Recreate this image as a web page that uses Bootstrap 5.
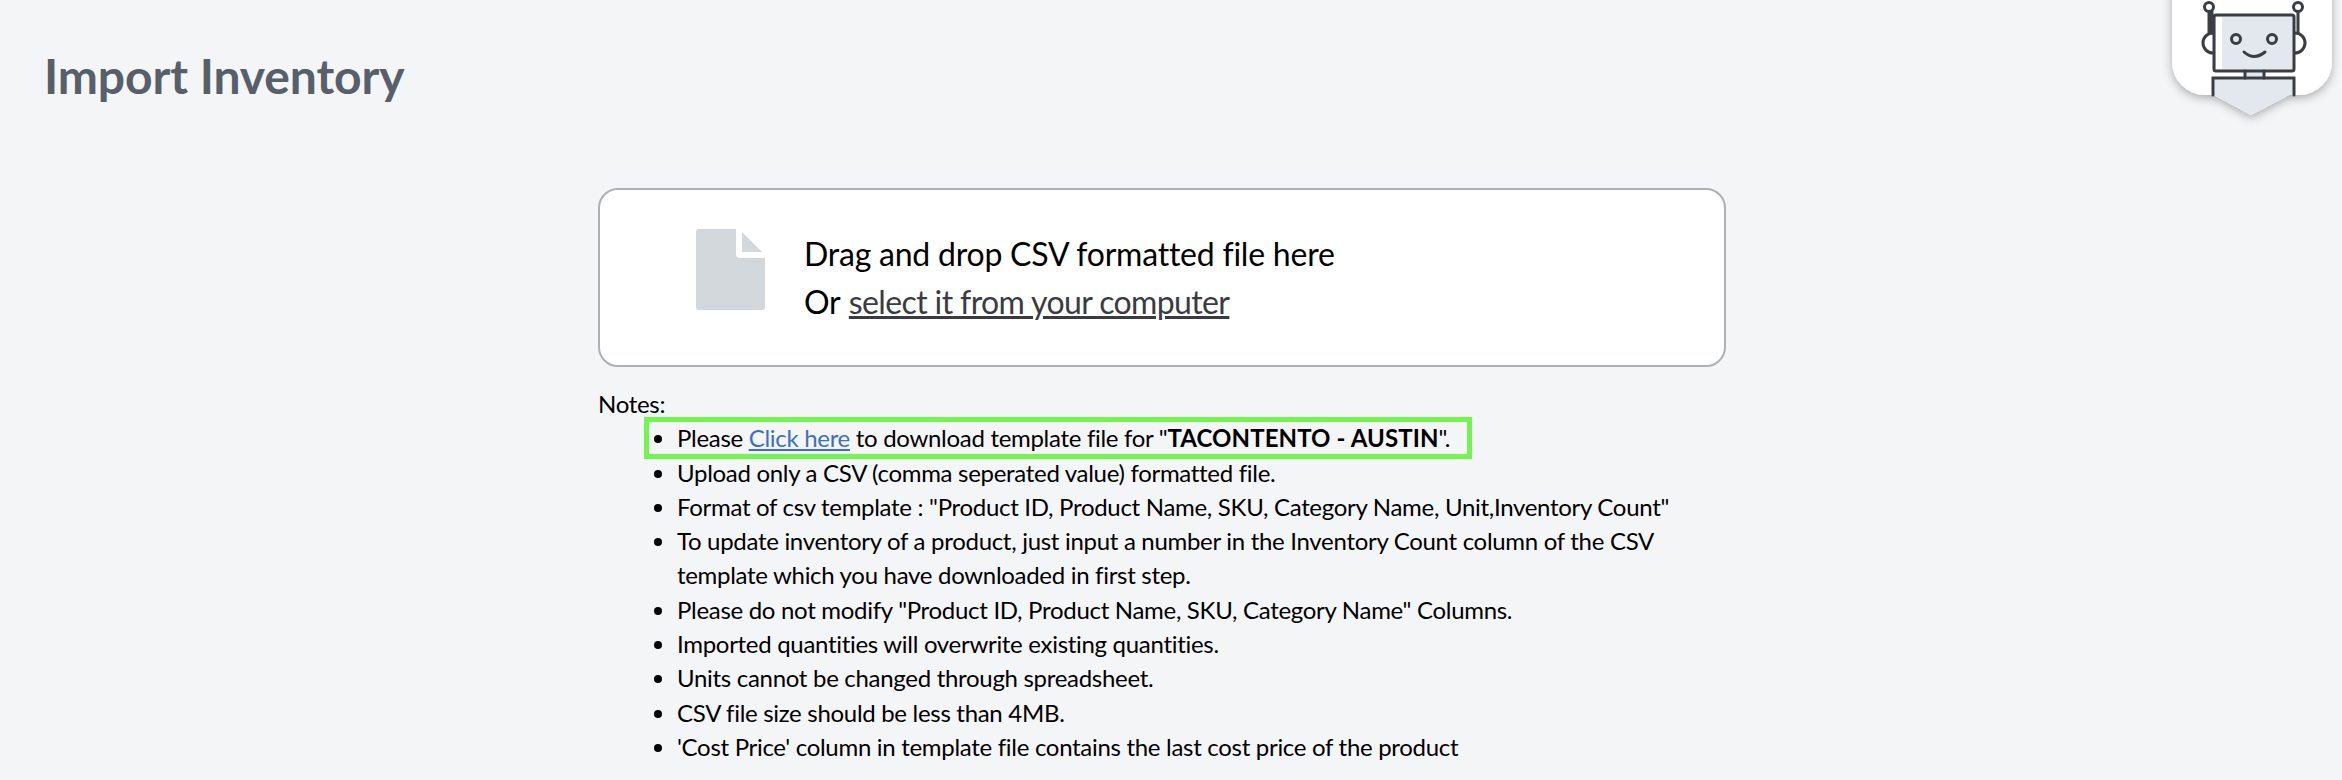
<!DOCTYPE html>
<html lang="en">
<head>
    <meta charset="UTF-8">
    <title>Import Inventory</title>
    <link href="https://cdn.jsdelivr.net/npm/bootstrap@5.3.0/dist/css/bootstrap.min.css" rel="stylesheet">
    <style>
        body { background: #f4f5f7; font-family: "Lato", "Liberation Sans", sans-serif; color: #000; overflow: hidden; }
        .page-head { padding: 44px 44px 0; height: 188px; }
        .page-title { font-size: 48px; font-weight: 700; line-height: 64px; color: #575f6b; margin: 0; letter-spacing: -0.1px; }
        .import-wrap { width: 1128px; margin-left: 598px; }
        .drop-box { height: 179px; background: #fff; border: 2px solid #adb0b5; border-radius: 20px; padding-left: 96px; gap: 39px; }
        .drop-icon { margin-top: 39px; }
        .drop-text { font-size: 32px; line-height: 48px; letter-spacing: -0.22px; }
        .drop-text a { color: #3a3b42; letter-spacing: -0.62px; margin-left: 1px; }
        .notes { font-size: 24px; line-height: 34.3px; margin-top: 20px; letter-spacing: -0.3px; }
        .notes ul { margin: 0; padding-left: 79px; }
        .notes a { color: #3d6fc4; }
        .notes b { letter-spacing: 0.1px; }
        .hilite { position: relative; }
        .hilite::before { content: ""; position: absolute; left: -33px; right: -22px; top: -4px; bottom: -3px; border: 5px solid #72f54f; }
        .bot-badge { position: absolute; top: 0; right: 0; }
        .bot-lines { filter: blur(0.5px); }
    </style>
</head>
<body>

<svg class="bot-badge" width="200" height="130" viewBox="0 0 200 130">
    <defs>
        <filter id="botShadow" x="-20%" y="-20%" width="140%" height="140%">
            <feDropShadow dx="0" dy="3" stdDeviation="5" flood-color="#000" flood-opacity="0.3"/>
        </filter>
    </defs>
    <path d="M30 -20H190V62a33 33 0 0 1 -33 33H147L109 115L72 95H63a33 33 0 0 1 -33 -33Z" fill="#fff" filter="url(#botShadow)"/>
    <path d="M72 78H152V95H147L109 115L72 95Z" fill="#e3e8ef"/>
    <rect x="72" y="15" width="80" height="56" rx="2" fill="#e3e8ef"/>
    <rect x="74" y="17" width="6" height="52" fill="#fff"/>
    <rect x="103" y="71" width="19" height="7" fill="#e3e8ef"/>
    <g class="bot-lines" fill="none" stroke="#3a3d44" stroke-width="3" stroke-linecap="round">
        <rect x="72" y="15" width="80" height="56" rx="2"/>
        <circle cx="67" cy="7" r="4.5"/>
        <circle cx="156" cy="7" r="4.5"/>
        <path d="M67 12V33M70 12V33M156 12V33"/>
        <path d="M71 33a10 10 0 0 0 0 20"/>
        <path d="M153 33a10 10 0 0 1 0 20"/>
        <circle cx="94" cy="39" r="4.5"/>
        <circle cx="130" cy="39" r="4.5"/>
        <path d="M102 52q10 9 21 0"/>
        <path d="M103 71V78M122 71V78"/>
        <path d="M71 95V78H152V95"/>
    </g>
</svg>

<div class="page-head">
    <h1 class="page-title">Import Inventory</h1>
</div>

<div class="import-wrap">
    <div class="drop-box d-flex align-items-start">
        <svg class="drop-icon" width="69" height="81" viewBox="0 0 69 81">
            <path d="M3 0H40V25a4 4 0 0 0 4 4H69V78a3 3 0 0 1 -3 3H3a3 3 0 0 1 -3 -3V3a3 3 0 0 1 3 -3Z" fill="#d3d8dc"/>
            <path d="M46 3L66 23H46Z" fill="#d3d8dc"/>
        </svg>
        <div class="drop-text align-self-center">
            <div>Drag and drop CSV formatted file here</div>
            <div>Or <a href="#">select it from your computer</a></div>
        </div>
    </div>

    <div class="notes">
        <div>Notes:</div>
        <ul>
            <li><span class="hilite d-inline-block">Please <a href="#">Click here</a> to download template file for "<b>TACONTENTO - AUSTIN</b>".</span></li>
            <li>Upload only a CSV (comma seperated value) formatted file.</li>
            <li>Format of csv template : "Product ID, Product Name, SKU, Category Name, Unit,Inventory Count"</li>
            <li>To update inventory of a product, just input a number in the Inventory Count column of the CSV<br>template which you have downloaded in first step.</li>
            <li>Please do not modify "Product ID, Product Name, SKU, Category Name" Columns.</li>
            <li>Imported quantities will overwrite existing quantities.</li>
            <li>Units cannot be changed through spreadsheet.</li>
            <li>CSV file size should be less than 4MB.</li>
            <li>'Cost Price' column in template file contains the last cost price of the product</li>
        </ul>
    </div>
</div>

</body>
</html>
